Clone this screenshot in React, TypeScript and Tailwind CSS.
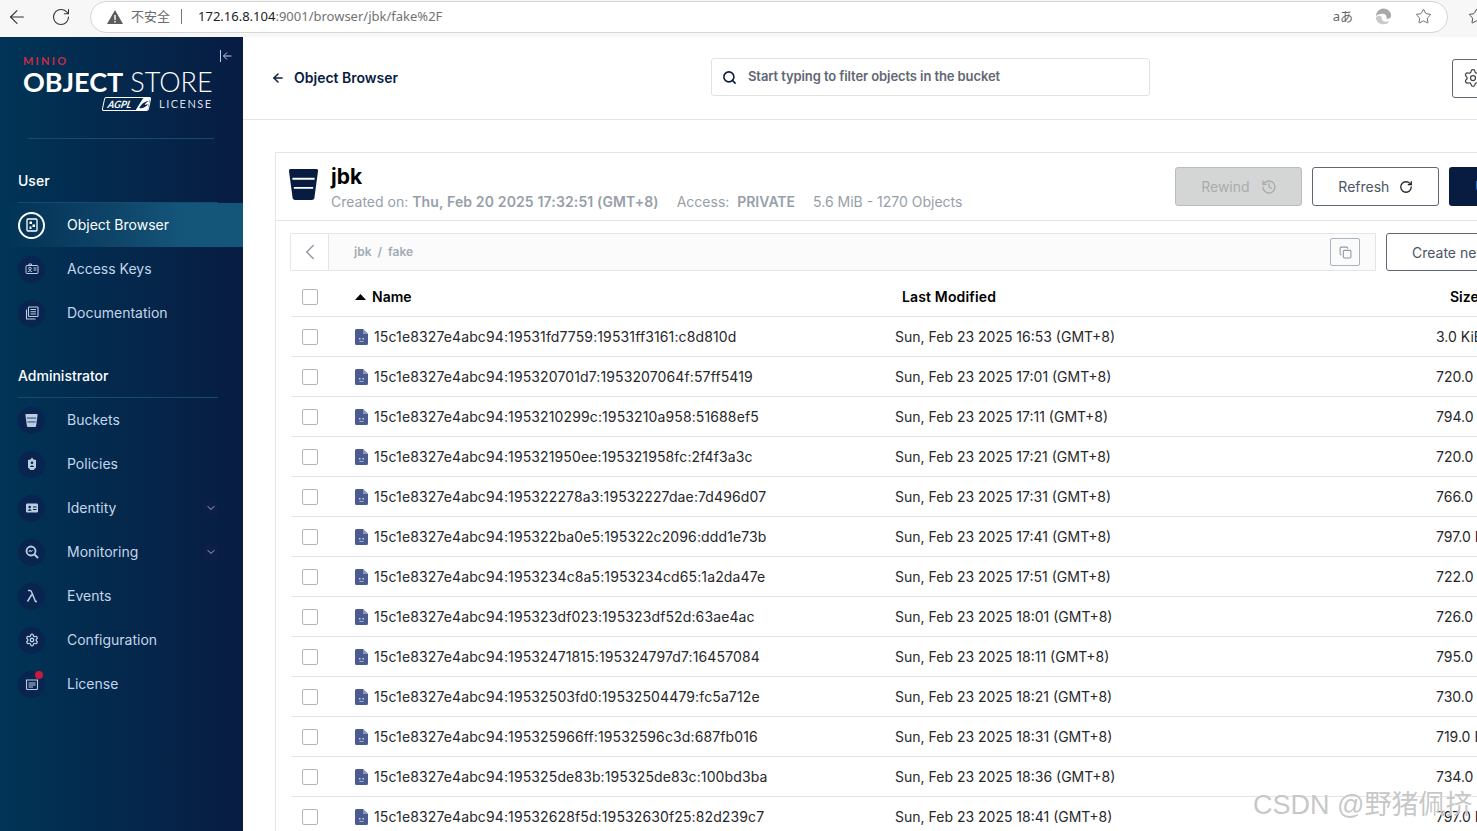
import { ArrowLeft, ChevronDown, ChevronLeft, Copy, History, RotateCw, Search, Settings, Star } from "lucide-react";
import type { ReactNode } from "react";

const rows = [
  ["15c1e8327e4abc94:19531fd7759:19531ff3161:c8d810d", "Sun, Feb 23 2025 16:53 (GMT+8)", "3.0 KiB"],
  ["15c1e8327e4abc94:195320701d7:1953207064f:57ff5419", "Sun, Feb 23 2025 17:01 (GMT+8)", "720.0 B"],
  ["15c1e8327e4abc94:1953210299c:1953210a958:51688ef5", "Sun, Feb 23 2025 17:11 (GMT+8)", "794.0 B"],
  ["15c1e8327e4abc94:195321950ee:195321958fc:2f4f3a3c", "Sun, Feb 23 2025 17:21 (GMT+8)", "720.0 B"],
  ["15c1e8327e4abc94:195322278a3:19532227dae:7d496d07", "Sun, Feb 23 2025 17:31 (GMT+8)", "766.0 B"],
  ["15c1e8327e4abc94:195322ba0e5:195322c2096:ddd1e73b", "Sun, Feb 23 2025 17:41 (GMT+8)", "797.0 B"],
  ["15c1e8327e4abc94:1953234c8a5:1953234cd65:1a2da47e", "Sun, Feb 23 2025 17:51 (GMT+8)", "722.0 B"],
  ["15c1e8327e4abc94:195323df023:195323df52d:63ae4ac", "Sun, Feb 23 2025 18:01 (GMT+8)", "726.0 B"],
  ["15c1e8327e4abc94:19532471815:195324797d7:16457084", "Sun, Feb 23 2025 18:11 (GMT+8)", "795.0 B"],
  ["15c1e8327e4abc94:19532503fd0:19532504479:fc5a712e", "Sun, Feb 23 2025 18:21 (GMT+8)", "730.0 B"],
  ["15c1e8327e4abc94:195325966ff:19532596c3d:687fb016", "Sun, Feb 23 2025 18:31 (GMT+8)", "719.0 B"],
  ["15c1e8327e4abc94:195325de83b:195325de83c:100bd3ba", "Sun, Feb 23 2025 18:36 (GMT+8)", "734.0 B"],
  ["15c1e8327e4abc94:19532628f5d:19532630f25:82d239c7", "Sun, Feb 23 2025 18:41 (GMT+8)", "797.0 B"],
];

function BucketIcon({ className, line = "#fff" }: { className: string; line?: string }) {
  return (
    <svg viewBox="0 0 30 32" className={className}>
      <path d="M2 0h26a2 2 0 0 1 2 2.400L26.400 29a3 3 0 0 1-3 3H6.600a3 3 0 0 1-3-3L0 2.400A2 2 0 0 1 2 0Z" fill="currentColor" />
      <path d="M3.500 10h23M5 19.500h20" stroke={line} strokeWidth="2" />
    </svg>
  );
}

function FileIcon() {
  return (
    <svg viewBox="0 0 13 16" className="h-4 w-[13px] shrink-0">
      <path d="M1.500 0H8l5 5v9.500a1.500 1.500 0 0 1-1.500 1.500h-10A1.500 1.500 0 0 1 0 14.500v-13A1.500 1.500 0 0 1 1.500 0Z" fill="#4b5a8f" />
      <path d="M8 0v5h5Z" fill="#8c97bb" />
      <path d="M4 9h1.500v1.500H4zM7.500 9H9v1.500H7.500zM4.500 12.200h4v.8h-4z" fill="#c9d0e4" />
    </svg>
  );
}

function CheckBox() {
  return <div className="h-4 w-4 rounded-[2px] border border-[#b5b5b5] bg-white" />;
}

function NavIcon({ name }: { name: string }) {
  const c = "h-[14px] w-[14px]";
  switch (name) {
    case "Object Browser":
      return (
        <svg viewBox="0 0 14 14" className={c} fill="none">
          <rect x="2" y="1" width="10" height="12" rx="1" stroke="#fff" strokeWidth="1.300" />
          <path d="M4.500 3.500h2.500V6H4.500zM7.500 6.500H10V9H7.500zM4.500 8.500h2V11h-2z" fill="#fff" />
        </svg>
      );
    case "Access Keys":
      return (
        <svg viewBox="0 0 14 14" className={c} fill="none" stroke="#b9cde3" strokeWidth="1">
          <rect x="1" y="3.500" width="12" height="8" rx="1" />
          <circle cx="5" cy="6.500" r="1.300" />
          <path d="M3 10c.4-1.600 3.600-1.600 4 0M8.500 6h3M8.500 8h3M4 3.500V2h2.500v1.500" />
        </svg>
      );
    case "Documentation":
      return (
        <svg viewBox="0 0 14 14" className={c} fill="none" stroke="#b9cde3" strokeWidth="1.100">
          <rect x="3.500" y="1" width="9.500" height="9.500" rx=".8" />
          <path d="M5.500 3.500h5.500M5.500 5.700h5.500M5.500 8h5.500M1.500 3.500V13h9" />
        </svg>
      );
    case "Buckets":
      return <BucketIcon className="h-[13px] w-[13px] text-[#b9cde3]" line="#0a2450" />;
    case "Policies":
      return (
        <svg viewBox="0 0 14 14" className={c}>
          <path d="M7 .5 8.500 2.500 11 3v7.500L8.500 13h-3L3 10.500V3l2.500-.5Z" fill="#b9cde3" />
          <circle cx="7" cy="5.800" r="1.300" fill="#082248" />
          <path d="M5 10c.3-2 3.700-2 4 0Z" fill="#082248" />
        </svg>
      );
    case "Identity":
      return (
        <svg viewBox="0 0 14 14" className={c}>
          <rect x="1" y="2.500" width="12" height="9" rx="1.200" fill="#b9cde3" />
          <circle cx="4.700" cy="6" r="1.300" fill="#082248" />
          <path d="M2.800 9.800c.3-2 3.500-2 3.800 0ZM8 5.500h3.500v1H8zM8 8h3.500v1H8z" fill="#082248" />
        </svg>
      );
    case "Monitoring":
      return (
        <svg viewBox="0 0 14 14" className={c} fill="none" stroke="#b9cde3">
          <circle cx="6" cy="6" r="4.500" strokeWidth="1.800" />
          <path d="m9.500 9.500 3.500 3.500" strokeWidth="2" />
          <path d="M3.800 7 5 5l1.200 1.800L7.500 5" strokeWidth="1" />
        </svg>
      );
    case "Events":
      return (
        <svg viewBox="0 0 14 14" className={c} fill="none" stroke="#b9cde3" strokeWidth="1.500">
          <path d="M3 1.500h1.800c1 0 1.500.6 1.900 1.700L10.500 12.500h1.500M6.800 5.500 2.500 12.500" />
        </svg>
      );
    case "Configuration":
      return <Settings className="h-[14px] w-[14px] text-[#b9cde3]" strokeWidth={2.200} />;
    default:
      return (
        <svg viewBox="0 0 14 14" className={c} fill="none" stroke="#b9cde3" strokeWidth="1.100">
          <path d="M1.500 3h11v8.500a1 1 0 0 1-1 1h-9a1 1 0 0 1-1-1Z" />
          <path d="M3.500 6h7M3.500 8h7M3.500 10h4.500" />
        </svg>
      );
  }
}

function NavItem({ label, active, chevron, badge }: { label: string; active?: boolean; chevron?: boolean; badge?: boolean }) {
  return (
    <div className={`flex h-11 items-center pl-[18px] pr-[25px] text-sm ${active ? "bg-[linear-gradient(90deg,rgba(20,86,122,0)_0%,#14567a_75%,#14567a_100%)] text-white" : "text-[#c3d5ea]"}`}>
      <div className={`relative flex h-[27px] w-[27px] shrink-0 items-center justify-center rounded-full ${active ? "border-2 border-white" : "bg-[#0a2450]"}`}>
        <NavIcon name={label} />
        {badge && <div className="absolute right-[2px] top-0 h-2 w-2 rounded-full bg-[#c51b3f]" />}
      </div>
      <span className="ml-[22px] flex-1">{label}</span>
      {chevron && (
        <div className="flex h-[15px] w-[15px] items-center justify-center rounded-[2px] bg-[#0d1f47]">
          <ChevronDown className="h-3 w-3 text-[#9db3cc]" />
        </div>
      )}
    </div>
  );
}

function SectionLabel({ children }: { children: ReactNode }) {
  return (
    <div className="ml-[18px] mr-[25px] flex h-[32px] items-start border-b border-[#154a72] text-sm font-medium text-white">
      {children}
    </div>
  );
}

function BrowserBar() {
  return (
    <div className="flex h-[37px] shrink-0 items-center bg-[#f7f7f7] pb-[4px] font-['Noto_Sans','Noto_Sans_CJK_SC',sans-serif]">
      <ArrowLeft className="ml-[6px] h-[22px] w-[22px] shrink-0 text-[#333]" strokeWidth={1.200} />
      <RotateCw className="ml-[23px] h-[20px] w-[20px] shrink-0 text-[#333]" strokeWidth={1.300} />
      <div className="ml-[19px] flex h-[32px] w-[1358px] shrink-0 items-center rounded-full border border-[#d5d5d5] bg-white">
        <svg viewBox="0 0 16 14" className="ml-[16px] h-[14px] w-4">
          <path d="M8 0 16 14H0Z" fill="#5c5c5c" />
          <path d="M7.300 5h1.400v5H7.300zM7.300 11h1.400v1.400H7.300z" fill="#fff" />
        </svg>
        <span className="ml-[8px] text-[13px] text-[#6b6b6b]">不安全</span>
        <div className="ml-[11px] h-[15px] w-px bg-[#777]" />
        <span className="ml-[16px] text-[13px] text-[#1b1b1b]">
          172.16.8.104<span className="text-[#727272]">:9001/browser/jbk/fake%2F</span>
        </span>
        <span className="ml-auto text-[13px] text-[#666]">aあ</span>
        <svg viewBox="0 0 18 18" className="ml-[22px] h-[17px] w-[17px]">
          <path d="M1 9a8 8 0 0 1 16-1c0 3-3 4-5 3 1-3-1-5-4-5-3.500 0-6 1-7 3Z" fill="#a9a9a9" />
          <path d="M1 10c0 5 5 8 9 7 2 0 4-1 5-3-3 1-8 1-8-4 0-2-4-3-6 0Z" fill="#c9c9c9" />
        </svg>
        <Star className="ml-[23px] mr-[15px] h-[17px] w-[17px] text-[#555]" strokeWidth={1.200} />
      </div>
      <Star className="ml-[20px] h-[17px] w-[17px] shrink-0 text-[#333]" strokeWidth={1.200} />
    </div>
  );
}

function Sidebar() {
  return (
    <aside className="flex w-[243px] shrink-0 flex-col bg-[linear-gradient(90deg,#003456_0%,#081c42_100%)]">
      <div className="relative h-[134px] pl-[23px] pt-[18px] font-['Lato',sans-serif]">
        <div className="text-[11px] font-bold leading-[12px] tracking-[2.200px] text-[#c72c48]">MINIO</div>
        <div className="mt-px whitespace-nowrap text-[27px] leading-[28px] text-white">
          <span className="font-bold">OBJECT</span> <span className="font-light">STORE</span>
        </div>
        <div className="flex items-center pl-[80px]">
          <div className="flex h-[14px] w-[47px] -skew-x-12 items-center rounded-[2px] border border-white pl-[4px] text-[10px] font-bold italic leading-none text-white">
            AGPL
            <svg viewBox="0 0 12 12" className="ml-auto h-[12px] w-[12px]">
              <path d="M0 12 5 0h7v12Z" fill="#fff" />
              <path d="M3 10c2-5 5-7 8-7-2 1-3 3-3 4 1 0 2-1 3-1-1 3-5 5-8 4Z" fill="#0a2450" />
            </svg>
          </div>
          <span className="ml-[9px] text-[11px] tracking-[1.500px] text-[#d6dfe9]">LICENSE</span>
        </div>
        <div className="absolute bottom-[32px] left-[28px] right-[29px] h-px bg-[#154a72]" />
        <svg viewBox="0 0 12 12" className="absolute right-[11px] top-[13px] h-3 w-3" fill="none" stroke="#b9cde3" strokeWidth="1">
          <path d="M.5 0v12M11.500 6H3.500M7 2.500 3.500 6 7 9.500" />
        </svg>
      </div>
      <SectionLabel>User</SectionLabel>
      <NavItem label="Object Browser" active />
      <NavItem label="Access Keys" />
      <NavItem label="Documentation" />
      <div className="h-[31px]" />
      <SectionLabel>Administrator</SectionLabel>
      <NavItem label="Buckets" />
      <NavItem label="Policies" />
      <NavItem label="Identity" chevron />
      <NavItem label="Monitoring" chevron />
      <NavItem label="Events" />
      <NavItem label="Configuration" />
      <NavItem label="License" badge />
    </aside>
  );
}

function PanelHeader() {
  return (
    <div className="flex h-[68px] items-center border-b border-[#e5e5e5] pl-[13px]">
      <BucketIcon className="mb-[4px] h-[31px] w-[29px] shrink-0 text-[#081c42]" />
      <div className="ml-[13px] whitespace-nowrap pt-[3px]">
        <div className="text-[21px] font-bold leading-[26px] text-black">jbk</div>
        <div className="mt-[2px] flex text-sm leading-[20px] text-[#969fa9]">
          <span>Created on:&nbsp;<b className="font-semibold tracking-[0.14px]">Thu, Feb 20 2025 17:32:51 (GMT+8)</b></span>
          <span className="ml-[18px]">Access:&nbsp;&nbsp;<b className="font-semibold">PRIVATE</b></span>
          <span className="ml-[18px]">5.6 MiB - 1270 Objects</span>
        </div>
      </div>
      <div className="ml-[213px] flex h-[39px] w-[127px] shrink-0 items-center justify-center gap-[11px] rounded-[3px] border border-[#bbbdbd] bg-[#d4d6d6] text-sm text-[#a9acac]">
        Rewind <History className="h-4 w-4" />
      </div>
      <div className="ml-[10px] flex h-[39px] w-[127px] shrink-0 items-center justify-center gap-[10px] rounded-[3px] border border-[#5f6773] text-sm text-[#4b5563]">
        Refresh <RotateCw className="h-[14px] w-[14px] text-[#222]" strokeWidth={2.200} />
      </div>
      <div className="ml-[10px] flex h-[39px] w-[127px] shrink-0 items-center rounded-[3px] bg-[#081c42] pl-[26px] text-sm text-white">Upload</div>
    </div>
  );
}

function PathBar() {
  return (
    <div className="mt-[12px] flex h-[38px] pl-[14px]">
      <div className="flex w-[1086px] shrink-0 border border-[#e5e5e5] bg-[#fbfbfb]">
        <div className="flex w-[38px] items-center justify-center border-r border-[#e5e5e5] bg-white">
          <ChevronLeft className="h-[26px] w-[26px] text-[#8f99a5]" strokeWidth={1.300} />
        </div>
        <div className="ml-[25px] flex flex-1 items-center text-xs font-semibold text-[#a2abb5]">jbk&nbsp;&nbsp;/&nbsp;&nbsp;fake</div>
        <div className="mr-[15px] flex h-[28px] w-[30px] self-center items-center justify-center rounded-[2px] border border-[#a9b4bf]">
          <Copy className="h-[13px] w-[13px] text-[#8f99a5]" />
        </div>
      </div>
      <div className="ml-[10px] flex w-[140px] shrink-0 items-center whitespace-nowrap rounded-[3px] border border-[#5f6773] pl-[25px] pt-px text-sm text-[#4b5563]">Create new path</div>
    </div>
  );
}

function FileTable() {
  return (
    <div className="ml-[16px] mt-[7px] text-sm">
      <div className="flex h-[39px] items-center border-b border-[#e5e5e5] font-semibold text-black">
        <div className="w-[63px] shrink-0 pl-[10px]"><CheckBox /></div>
        <div className="flex w-[540px] shrink-0 items-center">
          <svg viewBox="0 0 11 6" className="h-[6px] w-[11px]"><path d="M5.500 0 11 6H0Z" fill="#000" /></svg>
          <span className="ml-[6px]">Name</span>
        </div>
        <div className="w-[542px] shrink-0 pl-[7px] tracking-[0.15px]">Last Modified</div>
        <div className="shrink-0 pl-[13px]">Size</div>
      </div>
      {rows.map(([name, date, size]) => (
        <div key={name} className="flex h-10 items-center border-b border-[#e5e5e5] whitespace-nowrap text-[#27272a]">
          <div className="w-[63px] shrink-0 pl-[10px]"><CheckBox /></div>
          <div className="flex w-[540px] shrink-0 items-center gap-[6px] tracking-[0.12px]"><FileIcon />{name}</div>
          <div className="w-[541px] shrink-0">{date}</div>
          <div className="shrink-0">{size}</div>
        </div>
      ))}
    </div>
  );
}

export default function App() {
  return (
    <div className="relative flex h-[831px] w-[1477px] flex-col overflow-hidden bg-white font-['Inter',sans-serif]">
      <BrowserBar />
      <div className="flex min-h-0 flex-1">
        <Sidebar />
        <main className="min-w-0 flex-1 overflow-hidden">
          <header className="flex h-[83px] items-center border-b border-[#e5e5e5] pl-[28px]">
            <ArrowLeft className="h-[14px] w-[14px] shrink-0 text-[#081c42]" strokeWidth={2.500} />
            <span className="ml-[9px] w-[131px] shrink-0 text-sm font-semibold text-[#081c42]">Object Browser</span>
            <div className="mb-[2px] ml-[286px] flex h-[38px] w-[439px] shrink-0 items-center rounded-[3px] border border-[#e2e2e2] pl-[10px] text-[13px] font-semibold tracking-[-0.1px] text-[#5f6773]">
              <Search className="h-[15px] w-[15px] text-[#081c42]" strokeWidth={2.500} />
              <span className="ml-[11px]">Start typing to filter objects in the bucket</span>
            </div>
            <div className="ml-[302px] flex h-[39px] w-[40px] shrink-0 items-center rounded-[3px] border border-[#5f6773] pl-[10px]">
              <Settings className="h-[20px] w-[20px] shrink-0 text-[#444]" strokeWidth={1.500} />
            </div>
          </header>
          <div className="pl-[32px] pt-[32px]">
            <section className="w-[1300px] border-l border-t border-[#e5e5e5]">
              <PanelHeader />
              <PathBar />
              <FileTable />
            </section>
          </div>
        </main>
      </div>
      <div className="pointer-events-none absolute bottom-[9px] left-[1253px] whitespace-nowrap font-['Liberation_Sans','Noto_Sans_CJK_SC',sans-serif] text-[27px] leading-[34px] text-[#b8b8b8]/80 [text-shadow:0_0_1px_#fff]">
        CSDN @野猪佩挤
      </div>
    </div>
  );
}
